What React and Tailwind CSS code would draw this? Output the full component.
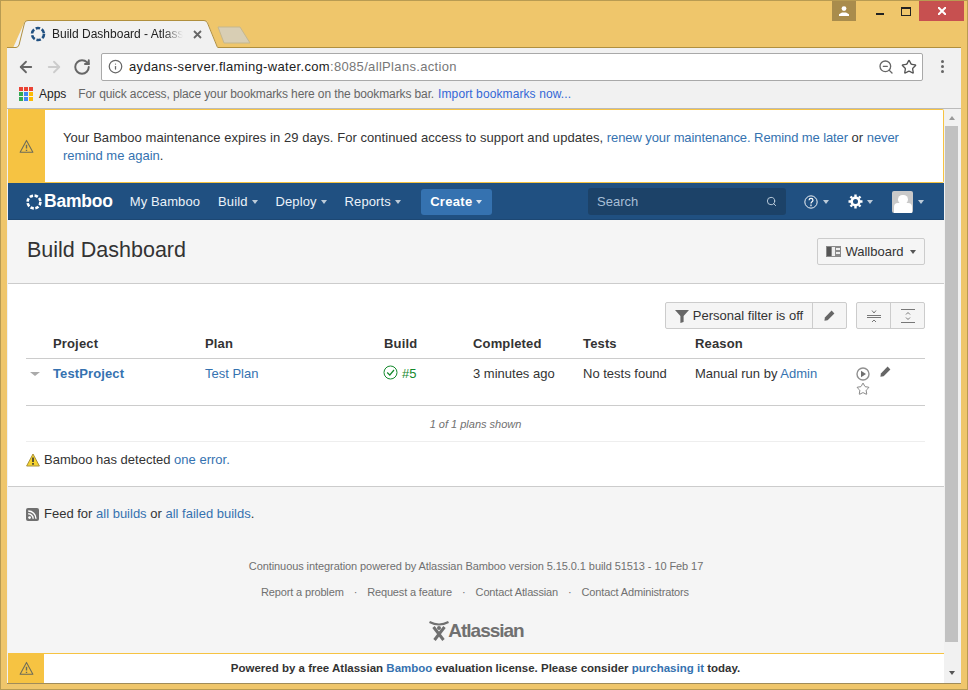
import { ArrowLeft, ArrowRight, RotateCw, Info, ZoomOut, Star, Search } from 'lucide-react';

const Caret = ({ className = 'border-t-white/70' }) => (
  <span className={`inline-block w-0 h-0 border-x-[3.5px] border-x-transparent border-t-[4px] ${className}`} />
);

const Warning = ({ size = 15, color = '#6b6b5a' }) => (
  <svg width={size} height={size} viewBox="0 0 16 16" fill="none" stroke={color} strokeWidth="1.1">
    <path d="M8 1.5 14.8 14.2H1.2Z" strokeLinejoin="round" />
    <path d="M8 6v4.2M8 11.4v1.4" strokeWidth="1.5" />
  </svg>
);

const SolidPencil = ({ className = '' }) => (
  <svg className={className} width="11" height="11" viewBox="0 0 11 11" fill="#666">
    <path d="M7.6 0.6 10.4 3.4 3.6 10.2 0.4 10.8 0.9 7.4Z" />
  </svg>
);

const Link = ({ children, className = '' }) => <span className={`text-[#3572b0] ${className}`}>{children}</span>;

function TitleBar() {
  return (
    <div className="h-[46px] shrink-0 flex justify-between">
      <div className="flex items-end pl-[12px]">
        <div className="relative z-10 w-[205px] h-[27px]">
          <svg className="absolute left-0 top-0 overflow-visible" width="205" height="28" viewBox="0 0 205 28">
            <path d="M0 28 H205 L194 1 H12Z" fill="#f1f1f1" />
            <path d="M0 27.5 H3 Q5 27.5 6 25 L11.5 3 Q12 .5 15 .5 H191 Q193.5 .5 194.5 3 L204.5 27.5" fill="#f1f1f1" stroke="#b08f3e" />
          </svg>
          <div className="relative flex items-center h-full pl-[17px] pt-[1px]">
            <svg width="16" height="16" viewBox="0 0 16 16" fill="none" stroke="#205081" strokeWidth="2.6">
              <circle cx="8" cy="8" r="6" strokeDasharray="4.5 1.8" />
            </svg>
            <span className="ml-[6px] w-[131px] text-[12px] leading-none text-[#222] whitespace-nowrap [mask-image:linear-gradient(to_right,black_85%,transparent)]">
              Build Dashboard - Atlassi
            </span>
            <svg className="ml-[10px]" width="9" height="9" viewBox="0 0 9 9" stroke="#666" strokeWidth="1.8">
              <path d="M1 1 8 8M8 1 1 8" />
            </svg>
          </div>
        </div>
        <svg className="-ml-[1px] mb-[3px]" width="34" height="18" viewBox="0 0 34 18">
          <path d="M1 1 H23 L33 17 H7 Z" fill="#d8ceb4" stroke="#c4b78f" strokeLinejoin="round" />
        </svg>
      </div>
      <div className="flex items-start pr-[3px]">
        <div className="w-[24px] h-[20px] bg-[#a98c4c] flex items-center justify-center mr-[10px]">
          <svg width="10" height="10" viewBox="0 0 10 10" fill="#fff">
            <circle cx="5" cy="2.6" r="2.4" />
            <path d="M0 10V8.2L3 6.4H7L10 8.2V10Z" />
          </svg>
        </div>
        <div className="w-[27px] h-[20px] flex items-start justify-center">
          <span className="mt-[12px] w-[8px] h-[2px] bg-[#222]" />
        </div>
        <div className="w-[26px] h-[20px] flex items-start justify-center">
          <span className="mt-[6px] w-[8px] h-[6px] border border-[#222] border-t-2 box-content" />
        </div>
        <div className="w-[45px] h-[20px] bg-[#c75050] flex items-center justify-center">
          <svg width="8" height="8" viewBox="0 0 8 8" stroke="#fff" strokeWidth="2"><path d="M0 0 8 8M8 0 0 8" /></svg>
        </div>
      </div>
    </div>
  );
}

function Toolbar() {
  return (
    <div className="shrink-0 bg-[#f1f1f1] border-t border-[#b08f3e]">
      <div className="h-[37px] flex items-center pl-[10px] pr-[17px]">
        <ArrowLeft size={18} strokeWidth={2.4} className="text-[#666]" />
        <ArrowRight size={18} strokeWidth={2.4} className="ml-[10px] text-[#ccc]" />
        <RotateCw size={18} strokeWidth={2.6} className="ml-[10px] text-[#666]" />
        <div className="ml-[10px] flex-1 h-[28px] bg-white border border-[#a9a9a9] rounded-[2px] flex items-center pl-[6px] pr-[5px]">
          <Info size={15} strokeWidth={2} className="text-[#666]" />
          <span className="ml-[6px] text-[13px] tracking-[0.33px] text-[#222]">aydans-server.flaming-water.com<span className="text-[#777]">:8085/allPlans.action</span></span>
          <ZoomOut size={16} strokeWidth={2} className="ml-auto text-[#666]" />
          <Star size={16} strokeWidth={2} className="ml-[7px] text-[#555]" />
        </div>
        <div className="ml-[18px] flex flex-col gap-[2px]">
          <span className="w-[3px] h-[3px] rounded-full bg-[#666]" />
          <span className="w-[3px] h-[3px] rounded-full bg-[#666]" />
          <span className="w-[3px] h-[3px] rounded-full bg-[#666]" />
        </div>
      </div>
      <div className="h-[23px] flex items-center pl-[12px] pb-[5px] whitespace-nowrap">
        <div className="grid grid-cols-3 gap-[1px] w-[14px]">
          {['bg-[#ea4335]', 'bg-[#ea4335]', 'bg-[#ea4335]', 'bg-[#34a853]', 'bg-[#4285f4]', 'bg-[#fbbc05]', 'bg-[#34a853]', 'bg-[#4285f4]', 'bg-[#fbbc05]'].map((c, i) => (
            <span key={i} className={`h-[4px] ${c}`} />
          ))}
        </div>
        <span className="ml-[6px] text-[12px] text-[#222]">Apps</span>
        <span className="ml-[12px] text-[12px] text-[#666] tracking-[-0.12px]">For quick access, place your bookmarks here on the bookmarks bar.</span>
        <span className="ml-[4px] text-[12px] text-[#3367d6] tracking-[0.1px]">Import bookmarks now...</span>
      </div>
    </div>
  );
}

function NavItem({ children, caret }) {
  return (
    <span className="flex items-center gap-[4px] text-[13px] tracking-[0.1px] text-[#ebf2f9]">
      {children}
      {caret && <Caret />}
    </span>
  );
}

function Nav() {
  return (
    <div className="h-[37px] shrink-0 bg-[#205081] border-b border-[#1c4773] flex items-center pl-[18px] pr-[20px] pt-[1px]">
      <svg width="16" height="16" viewBox="0 0 16 16" fill="none" stroke="#fff" strokeWidth="2.6">
        <circle cx="8" cy="8" r="6.4" strokeDasharray="3.4 1.6" />
      </svg>
      <span className="ml-[2px] text-[17.5px] font-bold text-white tracking-[-0.2px]">Bamboo</span>
      <div className="ml-[17px] flex items-center gap-[18px]">
        <NavItem>My Bamboo</NavItem>
        <NavItem caret>Build</NavItem>
        <NavItem caret>Deploy</NavItem>
        <NavItem caret>Reports</NavItem>
      </div>
      <div className="ml-[20px] h-[26px] w-[71px] bg-[#3572b0] rounded-[3px] flex items-center justify-center gap-[4px] text-[13px] tracking-[0.3px] font-bold text-white">
        Create <Caret className="border-t-white/80" />
      </div>
      <div className="ml-auto w-[198px] h-[27px] bg-[#1c4268] rounded-[3px] flex items-center pl-[9px] pr-[9px] text-[13px] text-[#a8bfd6]">
        Search
        <Search size={11} className="ml-auto text-[#c5d4e3]" />
      </div>
      <div className="ml-[18px] flex items-center gap-[5px]">
        <svg width="14" height="14" viewBox="0 0 15 15" fill="none" stroke="#fff">
          <circle cx="7.5" cy="7.5" r="6.6" />
          <path d="M5.4 5.6C5.6 3 9.6 3.2 9.6 5.6 9.6 7.2 7.5 7.3 7.5 9M7.5 10.2V12" strokeWidth="1.3" />
        </svg>
        <Caret />
      </div>
      <div className="ml-[19px] flex items-center gap-[4px]">
        <svg width="15" height="15" viewBox="0 0 15 15" fill="none" stroke="#fff">
          <circle cx="7.5" cy="7.5" r="3.8" strokeWidth="2.6" />
          <path d="M7.5 0.5V3M7.5 12V14.5M0.5 7.5H3M12 7.5H14.5M2.5 2.5 4.2 4.2M10.8 10.8 12.5 12.5M12.5 2.5 10.8 4.2M4.2 10.8 2.5 12.5" strokeWidth="2.4" />
        </svg>
        <Caret />
      </div>
      <div className="ml-[19px] flex items-center gap-[5px]">
        <div className="w-[21px] h-[22px] bg-[#c9c9c9] rounded-[2px] overflow-hidden flex flex-col items-center pt-[4px]">
          <span className="w-[10px] h-[10px] rounded-full bg-white" />
          <span className="w-[18px] h-[10px] bg-white rounded-t-[4px] -mt-[1px]" />
        </div>
        <Caret />
      </div>
    </div>
  );
}

function Banner() {
  return (
    <div className="h-[74px] shrink-0 flex bg-white border-y border-r border-[#f6c342] rounded-r-[2px]">
      <div className="w-[37px] shrink-0 bg-[#f6c342] flex items-center justify-center">
        <Warning />
      </div>
      <div className="pl-[18px] pt-[19px] text-[13px] leading-[18px] text-[#333]">
        <p>
          <span className="tracking-[0.05px]">Your Bamboo maintenance expires in 29 days. For continued access to support and updates, </span>
          <Link className="tracking-[-0.1px]">renew your maintenance.</Link> <Link className="tracking-[-0.1px]">Remind me later</Link> or <Link className="tracking-[-0.1px]">never</Link>
        </p>
        <p><Link>remind me again</Link>.</p>
      </div>
    </div>
  );
}

function PageHeader() {
  return (
    <div className="h-[64px] shrink-0 bg-[#f5f5f5] border-b border-[#ccc] flex items-center justify-between pl-[19px] pr-[19px]">
      <h1 className="text-[21.5px] text-[#333] pb-[2px]">Build Dashboard</h1>
      <div className="h-[27px] w-[108px] border border-[#ccc] rounded-[2px] bg-[#f5f5f5] flex items-center justify-center gap-[4px] text-[13px] text-[#333]">
        <svg width="15" height="11" viewBox="0 0 15 11">
          <rect width="15" height="11" fill="#8a8a8a" />
          <rect x="1" y="1" width="4" height="9" fill="#555" />
          <rect x="6" y="1" width="3" height="9" fill="#eee" />
          <rect x="10" y="2" width="4" height="2" fill="#eee" />
          <rect x="10" y="6" width="4" height="2" fill="#eee" />
        </svg>
        Wallboard
        <Caret className="ml-[2px] border-t-[#555]" />
      </div>
    </div>
  );
}

const cols = 'grid grid-cols-[27px_152px_179px_89px_110px_112px_158px_1fr]';

function BuildTable() {
  return (
    <div className="text-[13px] text-[#333]">
      <div className={`${cols} h-[30px] items-center border-b border-[#ccc] font-bold tracking-[0.15px]`}>
        <span />
        <span>Project</span>
        <span>Plan</span>
        <span>Build</span>
        <span>Completed</span>
        <span>Tests</span>
        <span>Reason</span>
        <span />
      </div>
      <div className={`${cols} h-[47px] border-b border-[#ccc] pt-[6px] leading-[18px]`}>
        <span className="h-[18px] flex items-center pl-[4px]"><Caret className="border-x-[5px] border-t-[#aaa]" /></span>
        <Link className="font-bold tracking-[0.12px]">TestProject</Link>
        <Link>Test Plan</Link>
        <span className="flex items-start gap-[4px] -ml-[1px] text-[#14892c]">
          <svg width="15" height="15" viewBox="0 0 15 15" fill="none" stroke="#14892c">
            <circle cx="7.5" cy="7.5" r="6.5" />
            <path d="M4.2 7.5 6.8 10 11 5" strokeWidth="1.2" />
          </svg>
          #5
        </span>
        <span>3 minutes ago</span>
        <span>No tests found</span>
        <span>Manual run by <Link>Admin</Link></span>
        <div className="relative">
          <svg className="absolute left-[3px] top-[2px]" width="14" height="14" viewBox="0 0 14 14" fill="none" stroke="#909090">
            <circle cx="7" cy="7" r="6" strokeWidth="1.4" />
            <path d="M5 3.8 10 7 5 10.2Z" fill="#707070" stroke="none" />
          </svg>
          <Star size={14} strokeWidth={1.2} className="absolute left-[3px] top-[17px] text-[#555]" />
          <SolidPencil className="absolute left-[27px] top-[1px]" />
        </div>
      </div>
    </div>
  );
}

function Content() {
  return (
    <div className="h-[203px] shrink-0 bg-white border-b border-[#ccc] pl-[18px] pr-[19px] pt-[18px]">
      <div className="flex justify-end gap-[9px]">
        <div className="h-[27px] flex border border-[#ccc] rounded-[2px] bg-[#f5f5f5] text-[13px] text-[#333]">
          <div className="w-[147px] flex items-center justify-center gap-[4px] border-r border-[#ccc]">
            <svg width="14" height="14" viewBox="0 0 14 14" fill="#666">
              <path d="M0 1H14L8.6 7V13L5.4 14V7Z" />
            </svg>
            Personal filter is off
          </div>
          <div className="w-[33px] flex items-center justify-center">
            <SolidPencil />
          </div>
        </div>
        <div className="h-[27px] flex border border-[#ccc] rounded-[2px] bg-[#f5f5f5]">
          <div className="w-[34px] flex items-center justify-center border-r border-[#ccc]">
            <svg width="14" height="14" viewBox="0 0 14 14" fill="none" stroke="#777">
              <path d="M0 6.5H14M0 8.5H14" />
              <path d="M5 1.5 7 4 9 1.5M5 13 7 11 9 13" />
            </svg>
          </div>
          <div className="w-[33px] flex items-center justify-center">
            <svg width="14" height="14" viewBox="0 0 14 14" fill="none" stroke="#777">
              <path d="M0 .5H14M0 13.5H14" />
              <path d="M5 5.5 7 3.5 9 5.5M5 8.5 7 10.5 9 8.5" />
            </svg>
          </div>
        </div>
      </div>
      <BuildTable />
      <div className="h-[36px] pt-[1px] flex items-center justify-center border-b border-[#eee] text-[11px] italic text-[#707070]">1 of 1 plans shown</div>
      <div className="mt-[9px] flex items-center gap-[4px] text-[13px] text-[#333] leading-[18px]">
        <svg width="14" height="14" viewBox="0 0 14 14">
          <path d="M7 1 13.4 13H.6Z" fill="#f6d32e" stroke="#a8913c" strokeLinejoin="round" />
          <path d="M7 4.5V9M7 10V11.8" stroke="#333" strokeWidth="1.6" />
        </svg>
        <span>Bamboo has detected <Link>one error.</Link></span>
      </div>
    </div>
  );
}

function Footer() {
  return (
    <div className="flex-1 bg-[#f5f5f5] px-[18px] pt-[18px] text-[#707070]">
      <div className="flex items-center gap-[5px] text-[13px] text-[#333] leading-[18px]">
        <svg width="13" height="13" viewBox="0 0 13 13">
          <rect width="13" height="13" rx="2" fill="#707070" />
          <circle cx="3.6" cy="9.6" r="1.4" fill="#fff" />
          <path d="M2.2 5.8A5 5 0 0 1 7.2 10.8M2.2 3A7.8 7.8 0 0 1 10 10.8" fill="none" stroke="#fff" strokeWidth="1.4" />
        </svg>
        <span>Feed for <Link>all builds</Link> or <Link>all failed builds</Link>.</span>
      </div>
      <p className="mt-[35px] text-center text-[11px] leading-[16px] tracking-[-0.08px]">Continuous integration powered by Atlassian Bamboo version 5.15.0.1 build 51513 - 10 Feb 17</p>
      <div className="mt-[10px] pr-[2px] flex justify-center gap-[10px] text-[11px] leading-[16px] tracking-[-0.15px]">
        <span>Report a problem</span><span>·</span><span>Request a feature</span><span>·</span><span>Contact Atlassian</span><span>·</span><span>Contact Administrators</span>
      </div>
      <div className="mt-[19px] flex items-end justify-center text-[#707070]">
        <svg className="-mr-[2px]" width="22" height="22" viewBox="0 0 21 22" fill="none" stroke="#707070">
          <path d="M1 3Q10.5 8 20 3" strokeWidth="2" />
          <path d="M5 8 15 21M16 8 6 21" strokeWidth="3" />
          <circle cx="10.5" cy="9" r="2" fill="#707070" stroke="none" />
        </svg>
        <span className="text-[19px] font-bold leading-[20px] tracking-[-1px]">Atlassian</span>
      </div>
    </div>
  );
}

function LicenseBar() {
  return (
    <div className="h-[30px] shrink-0 flex bg-white border-t border-[#f6c342]">
      <div className="w-[36px] shrink-0 bg-[#f6c342] flex items-center justify-center">
        <Warning />
      </div>
      <p className="flex-1 pr-[17px] text-center text-[11.5px] font-bold text-[#333] leading-[28px]">
        Powered by a free Atlassian <Link>Bamboo</Link> evaluation license. Please consider <Link>purchasing it</Link> today.
      </p>
    </div>
  );
}

function Scrollbar() {
  return (
    <div className="flex-1 pl-[1px] pr-[3px] pt-[7px] flex flex-col items-center">
      <span className="w-0 h-0 border-x-[3.5px] border-x-transparent border-b-[4px] border-b-[#999]" />
      <div className="mt-[6px] w-full h-[516px] shrink-0 bg-[#c1c1c1]" />
      <span className="mt-[29px] w-0 h-0 border-x-[3.5px] border-x-transparent border-t-[4px] border-t-[#555]" />
    </div>
  );
}

export default function App() {
  return (
    <div className="w-[968px] h-[690px] overflow-hidden bg-[#efc66b] border border-[#b89b52] flex flex-col font-['Liberation_Sans',Arial,sans-serif]">
      <TitleBar />
      <div className="mx-[6px] mb-[5px] flex-1 min-h-0 flex flex-col border-b border-[#a08c5a]">
        <Toolbar />
        <div className="flex-1 min-h-0 flex bg-[#f1f1f1] border-t border-[#bbb] pl-[1px]">
          <div className="w-[936px] shrink-0 flex flex-col">
            <Banner />
            <Nav />
            <PageHeader />
            <Content />
            <Footer />
            <LicenseBar />
          </div>
          <Scrollbar />
        </div>
      </div>
    </div>
  );
}
